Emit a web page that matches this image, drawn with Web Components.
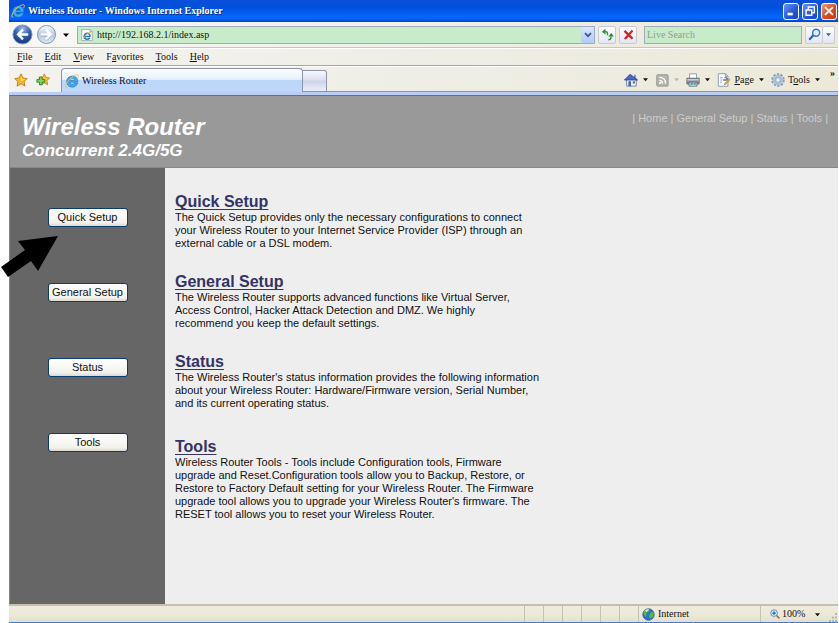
<!DOCTYPE html>
<html lang="en">
<head>
<meta charset="utf-8">
<title>Wireless Router</title>
<style>
  html, body { margin: 0; background: #fff; }
  body { font: 10px/12px "Liberation Serif", serif; color: #111; }
</style>
</head>
<body>
<browser-window>
  <title-bar>Wireless Router - Windows Internet Explorer</title-bar>
  <address-bar></address-bar>
  <menu-bar></menu-bar>
  <tab-bar>Wireless Router</tab-bar>
  <router-page>
    <page-banner slot="banner">Wireless Router<span slot="sub">Concurrent 2.4G/5G</span></page-banner>
    <side-nav slot="nav"></side-nav>
    <setup-section heading="Quick Setup">The Quick Setup provides only the necessary configurations to connect<br>your Wireless Router to your Internet Service Provider (ISP) through an<br>external cable or a DSL modem.</setup-section>
    <setup-section heading="General Setup">The Wireless Router supports advanced functions like Virtual Server,<br>Access Control, Hacker Attack Detection and DMZ. We highly<br>recommend you keep the default settings.</setup-section>
    <setup-section heading="Status">The Wireless Router's status information provides the following information<br>about your Wireless Router: Hardware/Firmware version, Serial Number,<br>and its current operating status.</setup-section>
    <setup-section heading="Tools" class="last">Wireless Router Tools - Tools include Configuration tools, Firmware<br>upgrade and Reset.Configuration tools allow you to Backup, Restore, or<br>Restore to Factory Default setting for your Wireless Router. The Firmware<br>upgrade tool allows you to upgrade your Wireless Router's firmware. The<br>RESET tool allows you to reset your Wireless Router.</setup-section>
  </router-page>
  <status-bar></status-bar>
</browser-window>

<script>
const define = (name, html, setup) => {
  const tpl = document.createElement('template');
  tpl.innerHTML = html;
  customElements.define(name, class extends HTMLElement {
    constructor() {
      super();
      this.attachShadow({ mode: 'open' }).append(tpl.content.cloneNode(true));
    }
    connectedCallback() { if (setup) setup(this, this.shadowRoot); }
  });
};

const ICONS = {
  ie: `<svg viewBox="0 0 16 16"><path d="M14.400 10.200H10.600C10.200 11.300 9.400 11.800 8.300 11.800 6.800 11.800 5.700 10.900 5.600 9.300H14.600C15 5 12.300 2.300 8.500 2.300 4.700 2.300 1.900 5 1.900 8.600 1.900 12.300 4.600 15 8.300 15 11.300 15 13.700 13.300 14.400 10.200ZM5.700 7.200C6 5.800 7 5.200 8.300 5.200S10.600 5.800 10.800 7.200Z" fill="#3cabf0" stroke="#1768b8" stroke-width=".6"/><path d="M2.600 15C-.5 16 1 10.500 5.500 6 9.500 2 14.500-.4 15.200 1.500 15.500 2.400 15 3.700 14.300 4.800" fill="none" stroke="#eec35a" stroke-width="1.100"/></svg>`,
  iepage: `<svg viewBox="0 0 16 16"><path d="M1 .500h11l3 3v12H1z" fill="#fff" stroke="#8d98a6"/><path d="M12 .500v3h3" fill="#dfe8f3" stroke="#8d98a6"/><path d="M12.200 10H5M12.200 10A4 4 0 1 0 11.500 12" fill="none" stroke="#1c78d0" stroke-width="2"/><path d="M3 13Q6 6 13 4.500" fill="none" stroke="#e9ac30" stroke-width="1.200"/></svg>`,
  back: `<svg viewBox="0 0 22 22"><defs><radialGradient id="g" cx=".5" cy=".2" r=".9"><stop stop-color="#9bb9e6"/><stop offset=".45" stop-color="#3263ad"/><stop offset=".8" stop-color="#173c80"/><stop offset="1" stop-color="#5ab0ee"/></radialGradient></defs><circle cx="11" cy="11" r="10" fill="url(#g)" stroke="#8496b5"/><path d="M17 11H7M11.500 6 6.500 11l5 5" fill="none" stroke="#fff" stroke-width="2.600"/></svg>`,
  forward: `<svg viewBox="0 0 22 22"><defs><linearGradient id="g" x2="0" y2="1"><stop stop-color="#fafcff"/><stop offset=".5" stop-color="#b9c8de"/><stop offset="1" stop-color="#e0e8f4"/></linearGradient></defs><circle cx="11" cy="11" r="9.500" fill="url(#g)" stroke="#8593ac"/><path d="M5 11h10M10.500 6l5 5-5 5" fill="none" stroke="#fff" stroke-width="2.600"/><path d="M5 12.700h7M11 17.500l5.500-5.500" fill="none" stroke="#98a8c0" stroke-width=".8"/></svg>`,
  star: `<svg viewBox="0 0 16 16"><path d="M8 1l2.200 4.700 5 .7-3.700 3.500 1 5L8 12.400 3.500 15l1-5.100L.8 6.400l5-.7z" fill="#fbb82c" stroke="#c47c12"/><path d="M8 3.500 9.400 7l3.300.4L8 9z" fill="#ffe793"/></svg>`,
  addstar: `<svg viewBox="0 0 16 16"><path d="M9.500 1l2 4 4 .6-3 3.200.9 4.700-3.900-2.100-4 2.200.9-4.800L3.100 5.600 7.500 5z" fill="#fbc22f" stroke="#c98a16"/><path d="M4 4.500h3v3h3v3H7v3H4v-3H1v-3h3z" fill="#7fd65c" stroke="#25802a"/></svg>`,
  refresh: `<svg viewBox="0 0 16 16"><path d="M8 9V6.500Q8 4.500 5 4.500" fill="none" stroke="#299329" stroke-width="1.600"/><path d="M5.500 1v7L1 4.500z" fill="#299329"/><path d="M9 8q.500 3.500 4 3.500V7.500" fill="none" stroke="none"/><path d="M9 14.500q3.500 0 3.500-4" fill="none" stroke="#299329" stroke-width="1.600"/><path d="M9 10.500h7L12.500 6z" fill="#299329"/></svg>`,
  stop: `<svg viewBox="0 0 16 16"><path d="M3 3.500 13 13M13 3 3.500 13.500" stroke="#d2232c" stroke-width="2.800"/></svg>`,
  search: `<svg viewBox="0 0 16 16"><circle cx="10" cy="5.800" r="4.300" fill="#e2f2ff" stroke="#2f75d2" stroke-width="1.800"/><path d="M6.500 9 1.500 14.500" stroke="#2562b8" stroke-width="2.600"/></svg>`,
  home: `<svg viewBox="0 0 16 16"><path d="M11.500 2h2v4h-2z" fill="#7b86c5"/><path d="M3 7h11v8H3z" fill="#f1f4fc" stroke="#6c7aa4"/><path d="M.5 8 7 1.500 15.500 8z" fill="#4e68c8" stroke="#29408f"/><path d="M5 9.500h3V15H5z" fill="#3d65b0"/><path d="M10 9.500h2.500V12H10z" fill="#5d6a88"/></svg>`,
  rss: `<svg viewBox="0 0 16 16"><rect x="2" y="2" width="13" height="13" rx="1" fill="#b5b5ad" stroke="#93938b"/><path d="M5 5q7 0 7 7M5 8.500q3.500 0 3.500 3.500" fill="none" stroke="#fff" stroke-width="1.500"/><circle cx="5.800" cy="11.500" r="1.200" fill="#fff"/></svg>`,
  printer: `<svg viewBox="0 0 16 16"><path d="M4 1h8v6H4z" fill="#fff" stroke="#8b96a6"/><path d="M1 6h14v6.500H1z" fill="#8d929b" stroke="#5f6570"/><path d="M1.500 7h13v1.500h-13z" fill="#d6d9de"/><path d="M3.500 10.500h9v4.500h-9z" fill="#e8f5ff" stroke="#59616d"/><path d="M5 12.500h3" stroke="#249ed8" stroke-width="2"/><path d="M8.500 12.500h3" stroke="#48b05a" stroke-width="2"/></svg>`,
  page: `<svg viewBox="0 0 16 16"><path d="M1.500.8h8l3 3v11.400h-11z" fill="#fbfcff" stroke="#8294b0"/><path d="M9.500.8v3h3M3.500 5.500h3M4 8h2M3.500 10.500h2M8 5.500h1" fill="none" stroke="#6e8fc4"/><path d="M7 8h5.500M9.500 4.500 13.500 8.500 8.500 13.500" fill="none" stroke="#6c7788" stroke-width="1.500"/><path d="M14.500 6.500 9 13" stroke="#dca22e" stroke-width="2"/></svg>`,
  gear: `<svg viewBox="0 0 16 16"><circle cx="8" cy="8" r="6.600" fill="none" stroke="#7d99b8" stroke-width="2.200" stroke-dasharray="2.600 1.540"/><circle cx="8" cy="8" r="4.500" fill="none" stroke="#a8c2dc" stroke-width="3.200"/><circle cx="8" cy="8" r="2.700" fill="#f1efe5" stroke="#7591b2" stroke-width=".8"/></svg>`,
  globe: `<svg viewBox="0 0 16 16"><circle cx="8" cy="8" r="7" fill="#2d6fd2" stroke="#264f99"/><path d="M2 4q3-4 7-2.500L8 5 5 6l1 2.500L4 11Q1 8 2 4zM10 6l4-1.500q1.500 4-1.500 7.500L10 13l-1.500-3z" fill="#55b847"/><path d="M4 3q3-2 5-1L5 5z" fill="#dcf5d2"/></svg>`,
  zoom: `<svg viewBox="0 0 16 16"><path d="m10 10 5 5" stroke="#9a6a4a" stroke-width="2.400"/><circle cx="6.500" cy="6.500" r="5.300" fill="#e6f3ff" stroke="#527db5" stroke-width="1.400"/><path d="M6.500 3.500v6M3.500 6.500h6" stroke="#1d6bd0" stroke-width="2"/></svg>`,
  down: `<svg viewBox="0 0 6 6"><path d="M0 1.500h6L3 5z" fill="currentColor"/></svg>`,
  chevron: `<svg viewBox="0 0 8 8"><path d="M1 2.200 4 5.200 7 2.200" fill="none" stroke="#3d5a8c" stroke-width="1.800"/></svg>`,
  min: `<svg viewBox="0 0 16 16"><path d="M4 11.500h6" stroke="#fff" stroke-width="3"/></svg>`,
  restore: `<svg viewBox="0 0 16 16"><path d="M6 6V3.500h7V10h-2.500" fill="none" stroke="#fff" stroke-width="1.600"/><path d="M3.500 6.800h6.500v6H3.500z" fill="none" stroke="#fff" stroke-width="1.600"/></svg>`,
  close: `<svg viewBox="0 0 16 16"><path d="m3.500 3.500 9 9M12.500 3.500l-9 9" stroke="#fff" stroke-width="2"/></svg>`,
  grip: `<svg viewBox="0 0 10 10"><path d="M7 1h2v2H7zM7 4.500h2v2H7zM7 8h2v2H7zM4 4.500h2v2H4zM4 8h2v2H4zM1 8h2v2H1z" fill="#b9b5a2"/></svg>`
};

define('ui-icon', `<style>
  :host { display: block; flex: none; width: var(--size, 14px); height: var(--size, 14px); }
  svg { display: block; width: 100%; height: 100%; }
</style><span></span>`, (el, root) => { root.querySelector('span').innerHTML = ICONS[el.getAttribute('name')]; });

define('browser-window', `<style>
  :host { display: flex; flex-direction: column; min-height: 100vh; box-sizing: border-box; margin: 0 1px 0 9px; background: #ece9d8; }
  ::slotted(router-page) { flex: 1; }
</style><slot></slot>`);

define('title-bar', `<style>
  :host { display: flex; align-items: center; gap: 3px; height: 22px; box-sizing: border-box; padding: 0 1px 0 2px; color: #fff; font-weight: bold;
    background: linear-gradient(#0a4fd8, #0050e0 35%, #0666fb 75%, #0360f5 88%, #0340c4); }
  h1 { flex: 1; margin: 0; font: inherit; text-shadow: 1px 1px #0a2a80; white-space: nowrap; }
  button { width: 16px; height: 17px; padding: 0; border: 1px solid #fff; border-radius: 3px; background: linear-gradient(135deg, #6d92f0, #2355d8 60%, #1a46c0); }
  .close { background: linear-gradient(135deg, #f0987c, #dd4a22 55%, #c23a14); }
  ui-icon { --size: 14px; }
</style>
<ui-icon name="ie"></ui-icon><h1><slot></slot></h1>
<button aria-label="Minimize"><ui-icon name="min"></ui-icon></button>
<button aria-label="Restore"><ui-icon name="restore"></ui-icon></button>
<button class="close" aria-label="Close"><ui-icon name="close"></ui-icon></button>`);

define('address-bar', `<style>
  :host { display: flex; align-items: center; gap: 3px; height: 26px; box-sizing: border-box; padding: 0 3px; border-bottom: 1px solid #c9c6b8;
    background: linear-gradient(90deg, #f8f8f6, #f0efe8 50%, #ece9d8); }
  button { display: grid; place-items: center; padding: 0; border: 0; background: none; }
  .round { --size: 21px; }
  .more { width: 12px; --size: 6px; margin-right: 2px; }
  .field { display: flex; align-items: center; height: 18px; box-sizing: border-box; border: 1px solid #9aaebf; background: #c8ecca; }
  .url { flex: 1; padding-left: 3px; gap: 2px; --size: 12px; }
  input { flex: 1; min-width: 0; height: 14px; padding: 0 2px; border: 0; outline: 0; background: none; font: inherit; color: #111; }
  input::placeholder { color: #8f9f8c; opacity: 1; }
  .drop { width: 13px; height: 16px; border-radius: 2px; --size: 8px; background: linear-gradient(#dbe6fd, #b4c9f6); }
  .tool { width: 18px; height: 18px; border: 1px solid #c9cbd2; border-radius: 2px; background: linear-gradient(#fdfdff, #e3e7f3); --size: 13px; }
  .stop { margin-right: 4px; }
  .find { width: 158px; box-sizing: border-box; }
  .pair { display: flex; }
  .pair .tool + .tool { width: 12px; border-left: 0; --size: 5px; color: #2864c0; }
</style>
<button class="round" aria-label="Back"><ui-icon name="back"></ui-icon></button>
<button class="round" aria-label="Forward"><ui-icon name="forward"></ui-icon></button>
<button class="more" aria-label="Recent pages"><ui-icon name="down"></ui-icon></button>
<div class="field url"><ui-icon name="iepage"></ui-icon><input aria-label="Address" value="http://192.168.2.1/index.asp"><button class="drop" aria-label="Show addresses"><ui-icon name="chevron"></ui-icon></button></div>
<button class="tool" aria-label="Refresh"><ui-icon name="refresh"></ui-icon></button>
<button class="tool stop" aria-label="Stop"><ui-icon name="stop"></ui-icon></button>
<div class="field find"><input aria-label="Search" placeholder="Live Search"></div>
<div class="pair"><button class="tool" aria-label="Search"><ui-icon name="search"></ui-icon></button><button class="tool" aria-label="Search options"><ui-icon name="down"></ui-icon></button></div>`);

define('menu-bar', `<style>
  :host { display: flex; align-items: center; gap: 12px; height: 18px; box-sizing: border-box; padding: 0 8px; border-top: 1px solid #fff; border-bottom: 1px solid #aaa797;
    background: linear-gradient(90deg, #f3f2ee, #efeee6 50%, #ece9d8); }
  button { padding: 0; border: 0; background: none; font: inherit; color: inherit; }
</style>
<button><u>F</u>ile</button><button><u>E</u>dit</button><button><u>V</u>iew</button><button>F<u>a</u>vorites</button><button><u>T</u>ools</button><button><u>H</u>elp</button>`);

define('tab-bar', `<style>
  :host { display: flex; height: 29px; box-sizing: border-box; border-top: 1px solid #fff; border-bottom: 3px solid #b9cdf5;
    background: linear-gradient(90deg, #f3f2ee, #efeee6 50%, #ece9d8); }
  button { display: flex; align-items: center; gap: 3px; padding: 0; border: 0; background: none; font: inherit; color: inherit; }
  .fav { display: flex; align-items: center; gap: 8px; padding: 0 11px 0 5px; --size: 14px; }
  .line { display: flex; flex: 1; align-items: flex-end; box-shadow: inset 0 -1px #8b93a6; }
  .tab { width: 242px; height: 24px; box-sizing: border-box; padding: 0 3px; border: 1px solid #8b93a6; border-bottom: 0; border-radius: 4px 4px 0 0; --size: 14px;
    background: linear-gradient(#fcfdfe, #e6f1fc 45%, #bcd7fa 50%, #bed6f9); }
  .new { width: 24px; height: 22px; border: 1px solid #8b93a6; border-left: 0; border-radius: 0 3px 0 0; background: linear-gradient(#f8f8fc, #dcdff0 45%, #cdd2e9 50%, #eceefa); }
  .cmds { display: flex; flex: 1; height: 25px; align-items: center; justify-content: flex-end; gap: 7px; --size: 14px; }
  .cmds .a { --size: 5px; margin-left: 2px; }
  .off { color: #bbb8ab; }
  .chev { align-self: flex-start; font-weight: bold; margin: 0 3px; }
</style>
<div class="fav"><button aria-label="Favorites Center"><ui-icon name="star"></ui-icon></button><button aria-label="Add to Favorites"><ui-icon name="addstar"></ui-icon></button></div>
<div class="line"><button class="tab"><ui-icon name="ie"></ui-icon><slot></slot></button><button class="new" aria-label="New Tab"></button>
<div class="cmds">
<button aria-label="Home"><ui-icon name="home"></ui-icon><ui-icon class="a" name="down"></ui-icon></button>
<button class="off" aria-label="Feeds"><ui-icon name="rss"></ui-icon><ui-icon class="a" name="down"></ui-icon></button>
<button aria-label="Print"><ui-icon name="printer"></ui-icon><ui-icon class="a" name="down"></ui-icon></button>
<button><ui-icon name="page"></ui-icon><span><u>P</u>age</span><ui-icon class="a" name="down"></ui-icon></button>
<button><ui-icon name="gear"></ui-icon><span>T<u>o</u>ols</span><ui-icon class="a" name="down"></ui-icon></button>
<button class="chev" aria-label="More">»</button></div></div>`);

define('router-page', `<style>
  :host { display: grid; grid-template: auto 1fr / 155px 1fr; border-top: 1px solid #716f64; border-left: 1px solid #8e8b7b; background: #eee;
    font: 11px/13px "Liberation Sans", Arial, sans-serif; color: #111; }
  .banner { grid-column: 1 / -1; }
  .nav { background: #666; }
  main { padding: 24px 10px; }
</style>
<div class="banner"><slot name="banner"></slot></div>
<div class="nav"><slot name="nav"></slot></div>
<main><slot></slot></main>`);

define('page-banner', `<style>
  :host { display: flex; justify-content: space-between; height: 72px; box-sizing: border-box; padding: 16px 10px 0 12px; border-bottom: 1px solid #888; background: #999; }
  h1 { margin: 0; font: italic bold 24px/29px "Liberation Sans", Arial, sans-serif; color: #fff; white-space: nowrap; }
  p { margin: 0; font: italic bold 17px/20px "Liberation Sans", Arial, sans-serif; color: #fff; }
  nav { color: #ccc; white-space: nowrap; }
  a { color: inherit; text-decoration: none; }
</style>
<div><h1><slot></slot></h1><p><slot name="sub"></slot></p></div>
<nav>| <a href="#home">Home</a> | <a href="#general">General Setup</a> | <a href="#status">Status</a> | <a href="#tools">Tools</a> |</nav>`);

define('side-nav', `<style>
  :host { display: flex; flex-direction: column; align-items: center; gap: 56px; padding-top: 40px; position: relative; }
  button { width: 80px; height: 19px; padding: 0 0 1px; border: 1px solid #0a3c74; border-radius: 3px; background: linear-gradient(#fff, #f3f2ec 80%, #dcd8cc);
    font: 11px/13px "Liberation Sans", Arial, sans-serif; color: #111; white-space: nowrap; }
  svg { position: absolute; left: -10px; top: 68px; width: 60px; height: 42px; }
</style>
<button>Quick Setup</button><button>General Setup</button><button>Status</button><button>Tools</button>
<svg viewBox="0 0 60 42"><path d="M58 0 18 5l7 9L1 31l7 10 23-16 7 10z" fill="#000"/></svg>`);

define('setup-section', `<style>
  :host { display: block; margin-bottom: 22px; }
  :host(.last) { margin-top: 27px; }
  h2 { margin: 0; font: bold 16px/19px "Liberation Sans", Arial, sans-serif; }
  a { color: #333366; text-decoration: underline; text-decoration-thickness: 1px; text-underline-offset: 2px; text-decoration-skip-ink: none; }
  p { margin: 0; white-space: nowrap; }
</style>
<h2><a href="#"></a></h2><p><slot></slot></p>`, (el, root) => {
  const a = root.querySelector('a');
  a.textContent = el.getAttribute('heading');
  a.href = '#' + a.textContent.toLowerCase().replace(' ', '-');
});

define('status-bar', `<style>
  :host { display: flex; align-items: stretch; justify-content: flex-end; height: 19px; box-sizing: border-box; border-top: 2px solid #c3c0b0; border-bottom: 1px solid #3a80d8;
    background: linear-gradient(#efecdf, #ebe8d7 60%, #e4e0cc); }
  i { width: 19px; box-sizing: border-box; border-left: 1px solid #c6c2b0; }
  .zone, .zoom { display: flex; align-items: center; gap: 3px; box-sizing: border-box; border-left: 1px solid #c6c2b0; }
  .zone { width: 122px; padding-left: 3px; --size: 13px; }
  .zoom { width: 78px; padding-left: 9px; --size: 10px; }
  button { display: flex; flex: 1; align-items: center; gap: 2px; padding: 0; border: 0; background: none; font: inherit; color: inherit; }
  .a { --size: 5px; margin-left: 8px; }
  .grip { align-self: flex-end; --size: 10px; }
</style>
<i></i><i></i><i></i><i></i><i></i><i></i>
<div class="zone"><ui-icon name="globe"></ui-icon>Internet</div>
<div class="zoom"><button><ui-icon name="zoom"></ui-icon>100%<ui-icon class="a" name="down"></ui-icon></button><ui-icon class="grip" name="grip"></ui-icon></div>`);
</script>
</body>
</html>
